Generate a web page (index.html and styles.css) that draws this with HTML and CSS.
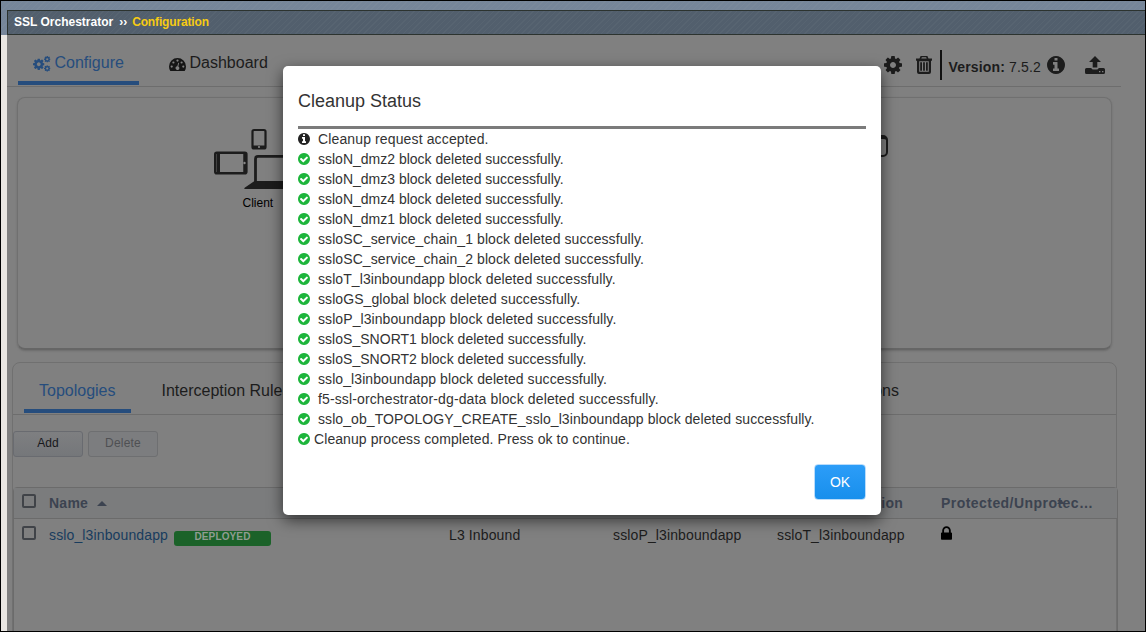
FILE: index.html
```html
<!DOCTYPE html>
<html lang="en">
<head>
<meta charset="utf-8">
<title>SSL Orchestrator</title>
<link rel="stylesheet" href="styles.css">
</head>
<body>
<svg class="defs" width="0" height="0" aria-hidden="true">
  <symbol id="cog" viewBox="128 128 1536 1536"><path d="M1152 896q0-106-75-181t-181-75-181 75-75 181 75 181 181 75 181-75 75-181zm512-109v222q0 12-8 23t-20 13l-185 28q-19 54-39 91 35 50 107 138 10 12 10 25t-9 23q-27 37-99 108t-94 71q-12 0-26-9l-138-108q-44 23-91 38-16 136-29 186-7 28-36 28h-222q-14 0-24.5-8.5t-11.5-21.5l-28-184q-49-16-90-37l-141 107q-10 9-25 9-14 0-25-11-126-114-165-168-7-10-7-23 0-12 8-23 15-21 51-66.5t54-70.5q-27-50-41-99l-183-27q-13-2-21-12.5t-8-23.5v-222q0-12 8-23t19-13l186-28q14-46 39-92-40-57-107-138-10-12-10-24 0-10 9-23 26-36 98.5-107.5t94.5-71.5q13 0 26 10l138 107q44-23 91-38 16-136 29-186 7-28 36-28h222q14 0 24.5 8.5t11.5 21.5l28 184q49 16 90 37l142-107q9-9 24-9 13 0 25 10 129 119 165 170 7 8 7 22 0 12-8 23-15 21-51 66.5t-54 70.5q26 50 41 98l183 28q13 2 21 12.5t8 23.5z"/></symbol>
  <symbol id="info" viewBox="128 128 1536 1536"><path d="M1152 1376v-160q0-14-9-23t-23-9h-96v-512q0-14-9-23t-23-9h-320q-14 0-23 9t-9 23v160q0 14 9 23t23 9h96v320h-96q-14 0-23 9t-9 23v160q0 14 9 23t23 9h448q14 0 23-9t9-23zm-128-896v-160q0-14-9-23t-23-9h-192q-14 0-23 9t-9 23v160q0 14 9 23t23 9h192q14 0 23-9t9-23zm640 416q0 209-103 385.5t-279.5 279.5-385.5 103-385.5-103-279.5-279.5-103-385.5 103-385.5 279.5-279.5 385.5-103 385.5 103 279.5 279.5 103 385.5z"/></symbol>
  <symbol id="check" viewBox="128 128 1536 1536"><path d="M1412 734q0-28-18-46l-91-90q-19-19-45-19t-45 19l-408 407-226-226q-19-19-45-19t-45 19l-91 90q-18 18-18 46 0 27 18 45l362 362q19 19 45 19 27 0 46-19l543-543q18-18 18-45zm252 162q0 209-103 385.5t-279.5 279.5-385.5 103-385.5-103-279.5-279.5-103-385.5 103-385.5 279.5-279.5 385.5-103 385.5 103 279.5 279.5 103 385.5z"/></symbol>
  <symbol id="lock" viewBox="320 128 1152 1408"><path d="M640 768h512v-192q0-106-75-181t-181-75-181 75-75 181v192zm832 96v576q0 40-28 68t-68 28h-960q-40 0-68-28t-28-68v-576q0-40 28-68t68-28h32v-192q0-184 132-316t316-132 316 132 132 316v192h32q40 0 68 28t28 68z"/></symbol>
</svg>
<div class="window">
  <header class="band">
    <div class="crumbs"><span>SSL Orchestrator</span><span class="sep">››</span><span class="here">Configuration</span></div>
  </header>
  <div class="below">
    <div class="strip"></div>
    <main class="page">
      <nav class="topnav">
        <a class="tab tab-configure">
          <svg class="cogs" viewBox="0 0 18 16"><use href="#cog" x="0" y="2.5" width="11.5" height="11.5"/><use href="#cog" x="11" y="0" width="6.5" height="6.5"/><use href="#cog" x="11" y="9.2" width="6.5" height="6.5"/></svg>
          <span>Configure</span>
        </a>
        <a class="tab tab-dashboard">
          <svg class="gauge" viewBox="0 0 17 13"><path d="M8.500 0A8.500 8.500 0 0 0 0 8.500Q0 11 1.300 13H15.700Q17 11 17 8.500A8.500 8.500 0 0 0 8.500 0z"/><g class="cut"><circle cx="2.700" cy="8.600" r="1.100"/><circle cx="4.400" cy="4.500" r="1.100"/><circle cx="8.500" cy="2.600" r="1.100"/><circle cx="12.600" cy="4.500" r="1.100"/><circle cx="14.300" cy="8.600" r="1.100"/><path d="M9.300 4.800L10.100 5 9.300 8.400A1.900 1.900 0 1 1 8.300 8.200z"/></g></svg>
          <span>Dashboard</span>
        </a>
        <div class="tools">
          <svg class="t-cog"><use href="#cog"/></svg>
          <svg class="t-trash" viewBox="0 0 16 18"><path fill-rule="evenodd" d="M4.600 0H11.400L12.500 2.500H16V4.800H15V16Q15 18 13 18H3Q1 18 1 16V4.800H0V2.500H3.500zM5.900 1.300L5.300 2.500H10.700L10.100 1.300zM3.200 5.200V15.800H12.800V5.200zM4.200 6.200H6V14.800H4.200zM7.100 6.200H8.900V14.800H7.100zM10 6.200H11.800V14.800H10z"/></svg>
          <i class="rule"></i>
          <span class="version"><b>Version:</b> 7.5.2</span>
          <svg class="t-info"><use href="#info"/></svg>
          <svg class="t-up" viewBox="0 0 20 18"><path fill-rule="evenodd" d="M10 0L16 6H12.300V11.500H7.700V6H4zM1.500 12H6.300Q6.700 13.500 8.500 13.500H11.500Q13.300 13.500 13.700 12H18.500Q20 12 20 13.500V16.500Q20 18 18.500 18H1.500Q0 18 0 16.500V13.500Q0 12 1.500 12zM14 15V16.300H15.400V15zM17 15V16.300H18.400V15z"/></svg>
        </div>
      </nav>
      <section class="diagram">
        <div class="client">
          <svg class="devices" viewBox="0 0 90 61"><g fill="none" stroke="#1c1c1c"><rect x="38.500" y="1" width="13" height="18.500" rx="1.500" stroke-width="2.200"/><rect x="1.300" y="23.800" width="31" height="20.500" rx="1.500" stroke-width="2.600"/><path d="M4.500 24V44" stroke-width="3"/><path d="M30.500 24V44" stroke-width="2.500"/><path d="M41.500 54V30Q41.500 27.300 44 27.300H88V54" stroke-width="2.800"/></g><path d="M38 16.500H52V19.500H38zM40.500 52H90V60H30.500Q30 59 31 58.500z" fill="#1c1c1c"/><circle cx="45" cy="18" r="1.100" fill="#888"/><circle cx="30.500" cy="34" r="1.200" fill="#888"/></svg>
          <span>Client</span>
        </div>
        <div class="server"></div>
      </section>
      <section class="panel">
        <nav class="subnav">
          <a class="sub active">Topologies</a>
          <a class="sub">Interception Rules</a>
          <a class="sub last">SSL Configurations</a>
        </nav>
        <div class="actions"><button class="btn">Add</button><button class="btn off">Delete</button></div>
        <div class="table">
          <div class="row head">
            <i class="box"></i><span class="name">Name <i class="caret"></i></span><span></span><span></span><span class="cfg">SSL Configuration</span><span class="prot">Protected/Unprotec…<i class="mini"></i></span>
          </div>
          <div class="row">
            <i class="box"></i><span class="name"><a class="link">sslo_l3inboundapp</a><b class="badge">DEPLOYED</b></span><span>L3 Inbound</span><span>ssloP_l3inboundapp</span><span>ssloT_l3inboundapp</span><span><svg class="lock"><use href="#lock"/></svg></span>
          </div>
        </div>
      </section>
    </main>
  </div>
  <div class="modal">
    <h1 class="title">Cleanup Status</h1>
    <ul class="log">
      <li class="wide"><svg class="dark"><use href="#info"/></svg>Cleanup request accepted.</li>
      <li class="tight"><svg><use href="#check"/></svg>ssloN_dmz2 block deleted successfully.</li>
      <li class="tight"><svg><use href="#check"/></svg>ssloN_dmz3 block deleted successfully.</li>
      <li class="tight"><svg><use href="#check"/></svg>ssloN_dmz4 block deleted successfully.</li>
      <li class="tight"><svg><use href="#check"/></svg>ssloN_dmz1 block deleted successfully.</li>
      <li><svg><use href="#check"/></svg>ssloSC_service_chain_1 block deleted successfully.</li>
      <li><svg><use href="#check"/></svg>ssloSC_service_chain_2 block deleted successfully.</li>
      <li><svg><use href="#check"/></svg>ssloT_l3inboundapp block deleted successfully.</li>
      <li><svg><use href="#check"/></svg>ssloGS_global block deleted successfully.</li>
      <li><svg><use href="#check"/></svg>ssloP_l3inboundapp block deleted successfully.</li>
      <li class="snug"><svg><use href="#check"/></svg>ssloS_SNORT1 block deleted successfully.</li>
      <li class="snug"><svg><use href="#check"/></svg>ssloS_SNORT2 block deleted successfully.</li>
      <li><svg><use href="#check"/></svg>sslo_l3inboundapp block deleted successfully.</li>
      <li class="wide"><svg><use href="#check"/></svg>f5-ssl-orchestrator-dg-data block deleted successfully.</li>
      <li><svg><use href="#check"/></svg>sslo_ob_TOPOLOGY_CREATE_sslo_l3inboundapp block deleted successfully.</li>
      <li class="done"><svg><use href="#check"/></svg>Cleanup process completed. Press ok to continue.</li>
    </ul>
    <button class="ok">OK</button>
  </div>
</div>
</body>
</html>
```
FILE: styles.css
```css
* { box-sizing: border-box; }
body { margin: 0; font: 14px/20px "Liberation Sans", Arial, sans-serif; color: #1c1c1c; }
.defs { display: none; }
.window { position: relative; width: 1146px; height: 632px; border: 1px solid #000; background: #808080; overflow: hidden; display: flex; flex-direction: column; }
.band { height: 34px; padding: 9px 0 0 6px; flex: none; background: repeating-linear-gradient(135deg, #76869a 0 3px, #7a899b 3px 4px); }
.crumbs { height: 25px; border: 1px solid #2c332f; border-right: 0; background: repeating-linear-gradient(135deg, #525f6d 0 3px, #576471 3px 4px); display: flex; padding-left: 6px; font: bold 12px/22px "Liberation Sans", Arial, sans-serif; color: #fff; }
.sep { margin: 0 5px 0 6px; }
.here { color: #f7cb12; letter-spacing: -.15px; }
.below { display: flex; flex: 1; min-height: 0; }
.strip { width: 6px; background: #e9e6e2; flex: none; }
.page { flex: 1; min-width: 0; }

.topnav { display: flex; height: 52px; width: 1114px; border-bottom: 1px solid #6d6d6d; padding-left: 11px; }
.tab { display: flex; height: 50px; font-size: 16px; line-height: 55px; }
.tab-configure { width: 121px; padding-left: 15px; color: #264d7d; border-bottom: 4px solid #264d7d; }
.tab-configure svg { fill: #264d7d; }
.cogs { width: 18px; height: 16px; margin: 21px 3.5px 0 0; }
.tab-dashboard { margin-left: 30px; }
.gauge { width: 17px; height: 13px; margin: 23px 3.5px 0 0; fill: #151515; }
.cut { fill: #808080; }
.tools { display: flex; margin-left: auto; padding-right: 16px; fill: #1c1c1c; }
.t-cog { width: 18px; height: 18px; margin: 21px 14px 0 0; }
.t-trash { width: 16px; height: 18px; margin: 21px 8px 0 0; }
.rule { width: 2px; height: 30px; margin: 15px 7px 0 0; background: #111; }
.version { margin: 22px 6px 0 0; letter-spacing: .15px; white-space: nowrap; }
.t-info { width: 18px; height: 18px; margin: 21px 20px 0 0; }
.t-up { width: 20px; height: 18px; margin: 21px 0 0; }

.diagram { display: flex; justify-content: space-between; width: 1095px; height: 253px; margin: 10px 0 0 10px; border: 1px solid #707070; border-bottom: 2px solid #666; border-radius: 8px; box-shadow: 0 1px 2px #6c6c6c; }
.client { width: 90px; margin: 31px 0 0 196px; font-size: 12px; line-height: 14px; color: #000; }
.client span { display: block; padding-left: 28.5px; margin-top: 6px; }
.devices { display: block; width: 90px; height: 61px; overflow: visible; }
.server { width: 22px; height: 22px; margin: 37px 223px 0 0; border: 2px solid #1c1c1c; border-top-width: 4px; border-radius: 5px; }

.panel { width: 1105px; height: 280px; margin: 12px 0 0 5px; border: 1px solid #707070; border-radius: 8px 8px 0 0; }
.subnav { display: flex; height: 52px; border-bottom: 1px solid #6d6d6d; padding-left: 11px; }
.sub { height: 50px; font-size: 16px; line-height: 55px; margin-left: 30.5px; white-space: nowrap; }
.sub.active { width: 107px; margin: 0; padding-left: 15px; color: #264d7d; border-bottom: 4px solid #264d7d; }
.sub.last { margin: 0 217px 0 auto; }
.actions { display: flex; gap: 5px; padding-top: 16px; height: 72px; }
.btn { width: 70px; height: 26px; padding: 0 0 2px; border: 1px solid #696b70; border-radius: 3px; background: linear-gradient(#7e7f81, #75777a); font: 12px/20px "Liberation Sans", Arial, sans-serif; color: #17181c; }
.btn.off { color: #4f5053; border-color: #6e6f71; background: #7c7d7f; letter-spacing: .2px; }
.table { width: 1105px; height: 145px; border: 1px solid #6b6b6b; border-radius: 4px 4px 0 0; letter-spacing: .13px; }
.row { display: grid; grid-template-columns: 27px 400px 164px 164px 164px 1fr; padding-left: 8px; height: 33px; line-height: 33px; white-space: nowrap; }
.head { height: 31px; line-height: 30px; background: #7b7c7d; border-bottom: 1px solid #6b6b6b; font-weight: bold; color: #3c4350; letter-spacing: .25px; }
.box { width: 14px; height: 14px; margin-top: 6px; border: 2px solid #404348; border-radius: 2px; }
.row:not(.head) .box { margin-top: 7px; }
.name { display: flex; }
.caret { margin: 13px 0 0 9px; width: 0; height: 0; border: 5px solid transparent; border-top: 0; border-bottom: 5px solid #3c4350; }
.cfg { width: 126px; direction: rtl; }
.prot { position: relative; letter-spacing: .45px; }
.mini { position: absolute; left: 116px; top: 12px; border: 4px solid transparent; border-top: 0; border-bottom: 4px solid #3c4350; }
.link { color: #183c5e; }
.badge { width: 97px; height: 15px; margin: 12px 0 0 6px; border-radius: 3px; background: #1b6229; color: #8f9c91; font-size: 10px; line-height: 12px; text-align: center; }
.lock { display: block; width: 11px; height: 14px; margin-top: 7px; fill: #000; }

.modal { position: absolute; left: 282px; top: 65px; width: 598px; height: 449px; background: #fff; border-radius: 5px; box-shadow: 0 5px 15px rgba(0,0,0,.6); padding: 0 15px; display: flex; flex-direction: column; color: #333; }
.title { margin: 0; height: 63px; padding-top: 25px; border-bottom: 3px solid #7b7b7b; font-size: 18px; font-weight: normal; line-height: 20px; flex: none; }
.log { list-style: none; margin: 0; padding: 0; letter-spacing: .08px; white-space: nowrap; }
.log li { display: flex; height: 20px; align-items: center; gap: 8px; }
.log .wide { letter-spacing: .13px; }
.log .snug { letter-spacing: .03px; }
.log .tight { letter-spacing: 0; }
.log .done { gap: 4px; }
.log svg { width: 12px; height: 12px; fill: #1db53b; }
.log .dark { fill: #222; }
.ok { align-self: flex-end; width: 52px; height: 36px; margin-top: 15px; border: 1px solid #b9dcfb; border-radius: 4px; background: linear-gradient(#2c9df8, #188fec); color: #fff; font: 14px/20px "Liberation Sans", Arial, sans-serif; }
```
